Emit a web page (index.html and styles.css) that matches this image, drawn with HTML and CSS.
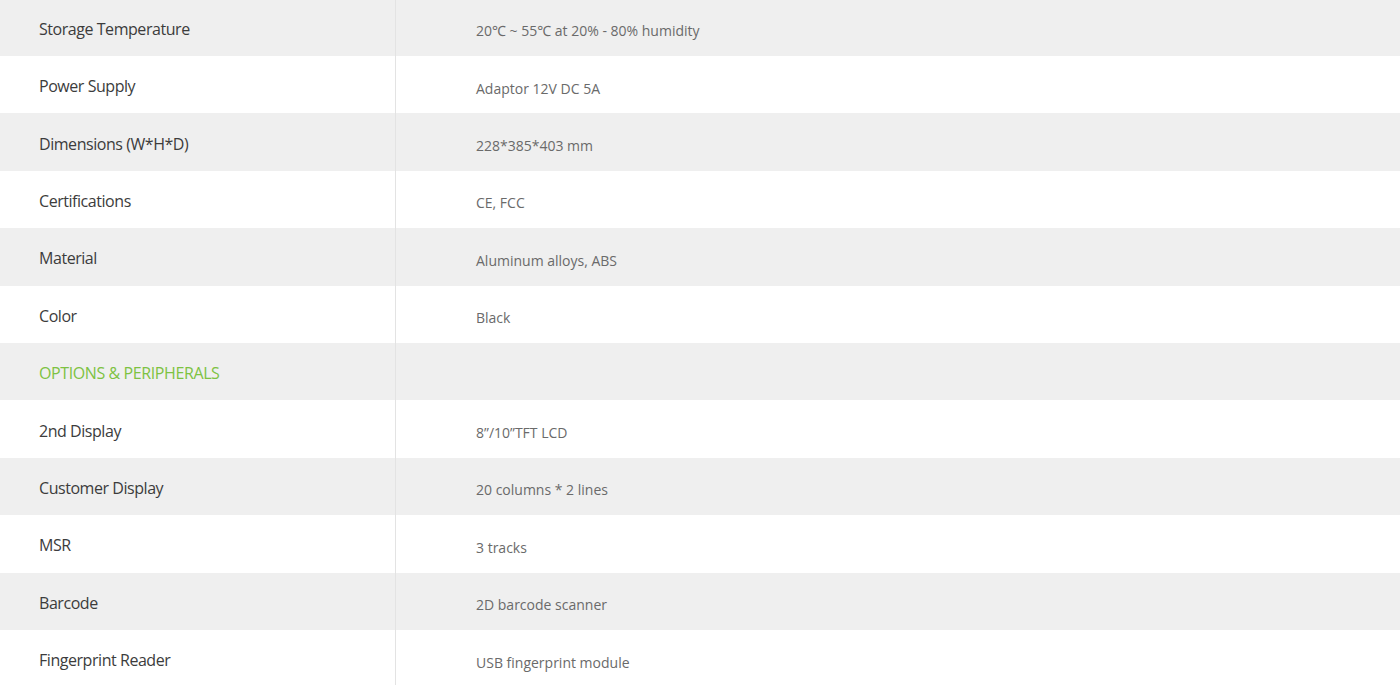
FILE: index.html
```html
<!DOCTYPE html>
<html>
<head>
<meta charset="utf-8">
<link rel="stylesheet" href="styles.css">
</head>
<body>
<div class="wrap">
<table class="spec">
<tr class="odd"><td class="label">Storage Temperature</td><td class="value">20℃ ~ 55℃ at 20% - 80% humidity</td></tr>
<tr><td class="label">Power Supply</td><td class="value">Adaptor 12V DC 5A</td></tr>
<tr class="odd"><td class="label">Dimensions (W*H*D)</td><td class="value">228*385*403 mm</td></tr>
<tr><td class="label">Certifications</td><td class="value">CE, FCC</td></tr>
<tr class="odd"><td class="label">Material</td><td class="value">Aluminum alloys, ABS</td></tr>
<tr><td class="label">Color</td><td class="value">Black</td></tr>
<tr class="odd"><td class="label section">OPTIONS &amp; PERIPHERALS</td><td class="value"></td></tr>
<tr><td class="label">2nd Display</td><td class="value">8”/10”TFT LCD</td></tr>
<tr class="odd"><td class="label">Customer Display</td><td class="value">20 columns * 2 lines</td></tr>
<tr><td class="label">MSR</td><td class="value">3 tracks</td></tr>
<tr class="odd"><td class="label">Barcode</td><td class="value">2D barcode scanner</td></tr>
<tr><td class="label">Fingerprint Reader</td><td class="value">USB fingerprint module</td></tr>
</table>
</div>
</body>
</html>
```
FILE: styles.css
```css
html, body {
  margin: 0;
  padding: 0;
  background: #ffffff;
}
.wrap {
  margin-top: -1.4px;
}
.spec {
  width: 100%;
  border-collapse: collapse;
  font-family: "Open Sans", "Noto Sans", sans-serif;
}
.spec tr {
  height: 57.4px;
}
.spec tr.odd {
  background: #efefef;
}
.spec td {
  padding: 0;
  vertical-align: middle;
}
.label {
  width: 356px;
  padding-left: 39px !important;
  padding-top: 3px !important;
  font-size: 16px;
  letter-spacing: -0.45px;
  color: #3c3c3c;
  border-right: 1px solid #e3e3e3;
}
.label.section {
  color: #7dc242;
  letter-spacing: -0.4px;
}
.value {
  padding-left: 80px !important;
  padding-top: 7px !important;
  font-size: 14px;
  letter-spacing: 0;
  color: #6a6a6a;
}
```
